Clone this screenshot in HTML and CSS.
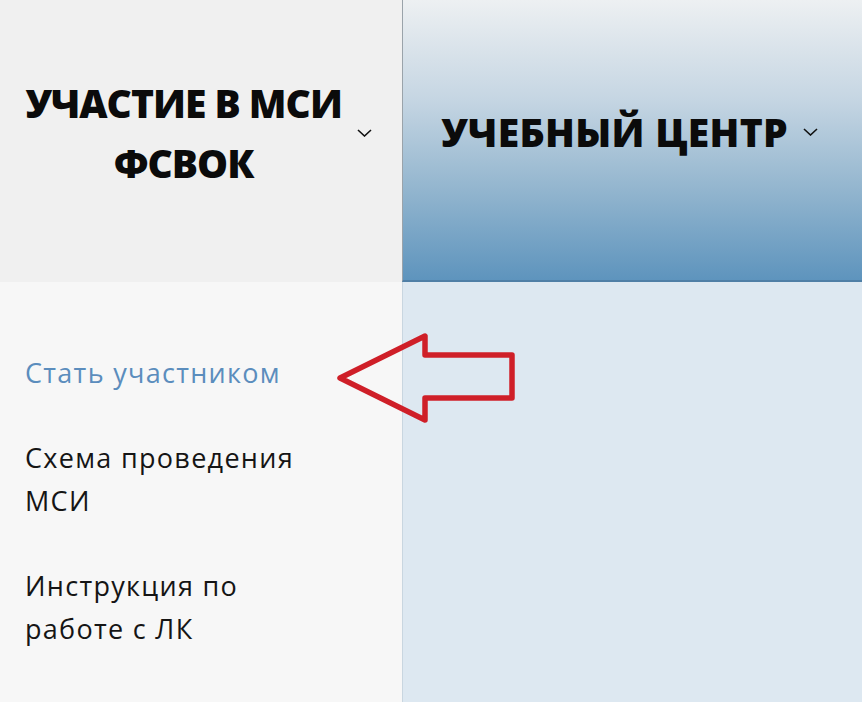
FILE: index.html
```html
<!DOCTYPE html>
<html lang="ru">
<head>
<meta charset="utf-8">
<link rel="stylesheet" href="styles.css">
</head>
<body>
<div class="page">
  <div class="tab tab-left">
    <div class="tab-title">УЧАСТИЕ В МСИ<br>ФСВОК</div>
    <svg class="chev" width="15" height="8" viewBox="0 0 15 8"><path d="M1 1 L7.5 7 L14 1" fill="none" stroke="#111" stroke-width="1.6"/></svg>
  </div>
  <div class="tab tab-right">
    <div class="tab-title">УЧЕБНЫЙ ЦЕНТР</div>
    <svg class="chev" width="15" height="8" viewBox="0 0 15 8"><path d="M1 1 L7.5 7 L14 1" fill="none" stroke="#111" stroke-width="1.6"/></svg>
  </div>
  <div class="menu">
    <div class="item active">Стать участником</div>
    <div class="item">Схема проведения<br>МСИ</div>
    <div class="item">Инструкция по<br>работе с ЛК</div>
  </div>
  <div class="pane"></div>
  <svg class="arrow" width="862" height="702" viewBox="0 0 862 702">
    <polygon points="340,378 425,336 425,355 512,355 512,398 425,398 425,420" fill="none" stroke="#cf1f28" stroke-width="5.5" stroke-linejoin="round"/>
  </svg>
</div>
</body>
</html>
```
FILE: styles.css
```css
html, body { margin: 0; padding: 0; }
body { width: 862px; height: 702px; overflow: hidden; font-family: "Open Sans", "DejaVu Sans", sans-serif; }
.page {
  position: relative;
  display: grid;
  grid-template-columns: 402px 1fr;
  grid-template-rows: 282px 1fr;
  width: 862px;
  height: 702px;
}
.tab {
  display: flex;
  align-items: center;
  justify-content: center;
  gap: 15px;
  padding-bottom: 17px;
  box-sizing: border-box;
}
.tab-left { background: #f0f0f0; padding-right: 5px; }
.tab-right {
  background: linear-gradient(to bottom, #edf0f2 0%, #c6d6e3 35%, #97b8d0 65%, #5e94bd 100%);
  border-left: 1px solid #9aa3aa;
  border-bottom: 2px solid #4f7fa6;
  padding-right: 6px;
}
.tab-title {
  font-weight: 800;
  font-size: 39px;
  line-height: 60px;
  text-align: center;
  color: #0b0b0b;
}
.tab-left .tab-title { letter-spacing: -1px; }
.tab-right .tab-title { letter-spacing: 0.3px; }
.chev { flex: none; }
.menu {
  background: #f7f7f7;
  padding: 69px 0 0 25px;
  display: flex;
  flex-direction: column;
  gap: 42px;
}
.item {
  font-size: 27px;
  line-height: 43px;
  letter-spacing: 1.3px;
  color: #151515;
}
.item.active { color: #5b8dbd; }
.pane { background: #dde8f1; border-left: 1px solid #c9d6e0; }
.arrow { position: absolute; left: 0; top: 0; pointer-events: none; }
```
